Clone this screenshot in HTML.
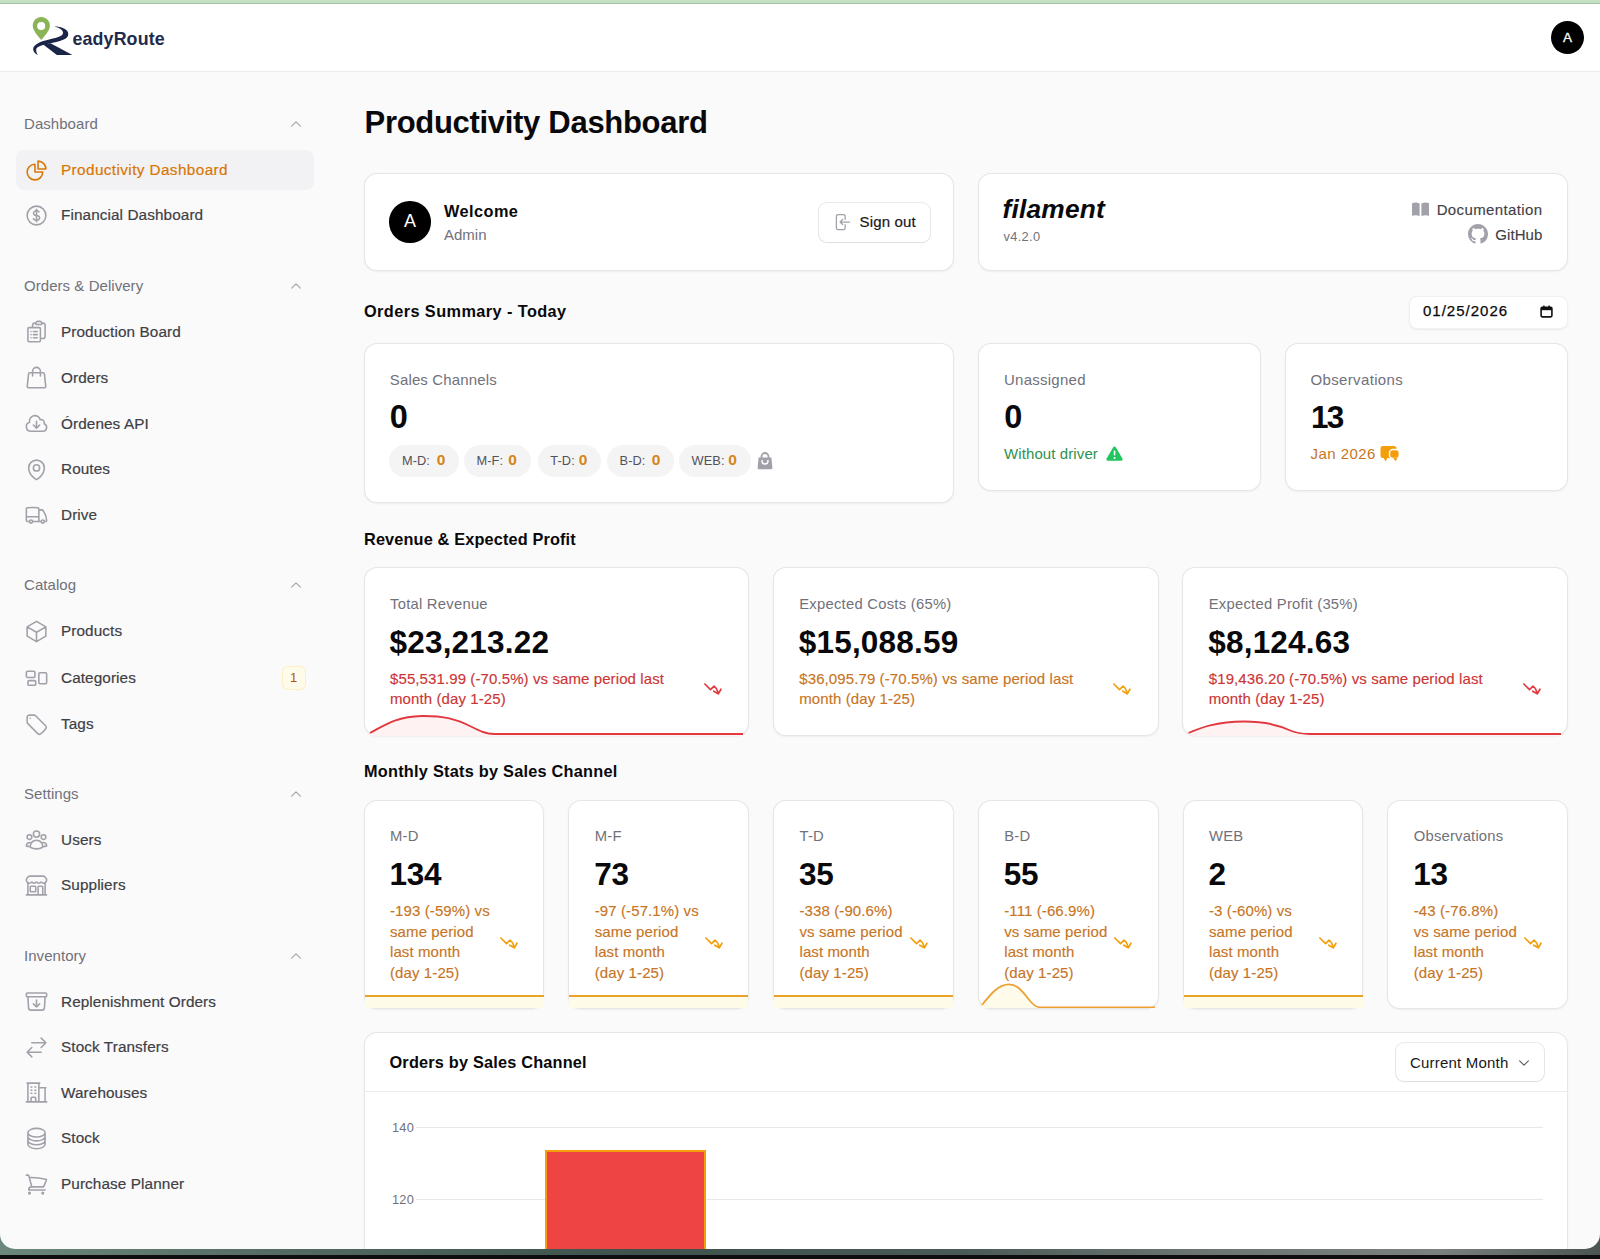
<!DOCTYPE html><html><head><meta charset="utf-8"><style>
*{box-sizing:border-box;margin:0;padding:0}
html,body{width:1600px;height:1259px;overflow:hidden;background:#0d0f10}
body{font-family:"Liberation Sans",sans-serif;position:relative;color:#09090b}
.abs{position:absolute}
.t{position:absolute;white-space:nowrap}
.card{position:absolute;background:#fff;border-radius:13px;box-shadow:inset 0 0 0 1px rgba(9,9,11,.1),0 1px 2px rgba(0,0,0,.05)}
</style></head><body>
<div class="abs" style="left:0;top:1230px;width:1600px;height:25px;background:linear-gradient(90deg,#6c887c 0%,#51675f 20%,#3f524d 40%,#4a5a56 60%,#6c7572 75%,#7b817e 90%,#4a5450 100%)"></div>
<div class="abs" style="left:0;top:0;width:1600px;height:1249px;background:#fafafa;border-radius:0 0 15px 15px;overflow:hidden">
<div class="abs" style="left:0px;top:0px;width:1600px;height:3px;background:#c3e1c3"></div>
<div class="abs" style="left:0px;top:3px;width:1600px;height:1px;background:#aabfaa"></div>
<div class="abs" style="left:0px;top:4px;width:1600px;height:67px;background:#fff"></div>
<div class="abs" style="left:0px;top:71px;width:1600px;height:1px;background:#ebebeb"></div>
<svg class="abs" style="left:0;top:0" width="80" height="60" viewBox="0 0 80 60">
<path d="M41.3,40.1 C38,36 32.75,30.5 32.75,25.7 C32.75,20.9 36.6,17.1 41.3,17.1 C46,17.1 49.9,20.9 49.9,25.7 C49.9,30.5 44.6,36 41.3,40.1 Z" fill="#8ab457"/>
<circle cx="41.2" cy="26.1" r="4" fill="#fff"/>
<path d="M54.3,26.6 C60.5,26.5 68.5,29 68.3,34.3 C68.1,39.2 61,41.3 50,43.4 C42,45 36.5,46.5 36.2,49.5 C36,51.5 36.8,53.5 37.8,54.9 C34.5,53.5 32.8,51 33.2,48.5 C33.8,44.5 40,41.6 50,39.3 C58,37.4 63,35.8 63,33 C63.1,30 59,27.5 54.3,26.6 Z" fill="#1b2547"/>
<path d="M43.2,44.6 L50.5,43.2 L72.4,55.1 L56.9,55.1 Z" fill="#1b2547"/>
</svg>
<div class="t" style="left:72.5px;top:28.60px;font-size:17.8px;line-height:20px;font-weight:bold;color:#1f2a4d;letter-spacing:0.15px;">eadyRoute</div>
<div class="abs" style="left:1551px;top:20.5px;width:33px;height:33px;border-radius:50%;background:#000;color:#fff;font-size:13.5px;line-height:33px;text-align:center;-webkit-text-stroke:0.3px #fff">A</div>
<div class="t" style="left:24px;top:114.37px;font-size:15px;line-height:20px;font-weight:normal;color:#71717a;letter-spacing:0.05px;">Dashboard</div>
<div class="abs" style="left:289.00px;top:117.20px;width:14px;height:14px;line-height:0"><svg viewBox="0 0 24 24" width="14" height="14" fill="none" stroke="#a1a1aa" stroke-width="1.8" stroke-linecap="round" stroke-linejoin="round" style=""><path d="m4.5 15.75 7.5-7.5 7.5 7.5"/></svg></div>
<div class="t" style="left:24px;top:276.17px;font-size:15px;line-height:20px;font-weight:normal;color:#71717a;letter-spacing:0.05px;">Orders &amp; Delivery</div>
<div class="abs" style="left:289.00px;top:279.00px;width:14px;height:14px;line-height:0"><svg viewBox="0 0 24 24" width="14" height="14" fill="none" stroke="#a1a1aa" stroke-width="1.8" stroke-linecap="round" stroke-linejoin="round" style=""><path d="m4.5 15.75 7.5-7.5 7.5 7.5"/></svg></div>
<div class="t" style="left:24px;top:575.47px;font-size:15px;line-height:20px;font-weight:normal;color:#71717a;letter-spacing:0.05px;">Catalog</div>
<div class="abs" style="left:289.00px;top:578.30px;width:14px;height:14px;line-height:0"><svg viewBox="0 0 24 24" width="14" height="14" fill="none" stroke="#a1a1aa" stroke-width="1.8" stroke-linecap="round" stroke-linejoin="round" style=""><path d="m4.5 15.75 7.5-7.5 7.5 7.5"/></svg></div>
<div class="t" style="left:24px;top:784.17px;font-size:15px;line-height:20px;font-weight:normal;color:#71717a;letter-spacing:0.05px;">Settings</div>
<div class="abs" style="left:289.00px;top:787.00px;width:14px;height:14px;line-height:0"><svg viewBox="0 0 24 24" width="14" height="14" fill="none" stroke="#a1a1aa" stroke-width="1.8" stroke-linecap="round" stroke-linejoin="round" style=""><path d="m4.5 15.75 7.5-7.5 7.5 7.5"/></svg></div>
<div class="t" style="left:24px;top:946.17px;font-size:15px;line-height:20px;font-weight:normal;color:#71717a;letter-spacing:0.05px;">Inventory</div>
<div class="abs" style="left:289.00px;top:949.00px;width:14px;height:14px;line-height:0"><svg viewBox="0 0 24 24" width="14" height="14" fill="none" stroke="#a1a1aa" stroke-width="1.8" stroke-linecap="round" stroke-linejoin="round" style=""><path d="m4.5 15.75 7.5-7.5 7.5 7.5"/></svg></div>
<div class="abs" style="left:16px;top:150.2px;width:298px;height:40.0px;background:#f2f2f4;border-radius:8px"></div>
<div class="abs" style="left:23.50px;top:157.70px;width:25px;height:25px;line-height:0"><svg viewBox="0 0 24 24" width="25" height="25" fill="none" stroke="#d97706" stroke-width="1.5" stroke-linecap="round" stroke-linejoin="round" style=""><path d="M10.5 6a7.5 7.5 0 1 0 7.5 7.5h-7.5V6Z"/><path d="M13.5 10.5H21A7.5 7.5 0 0 0 13.5 3v7.5Z"/></svg></div>
<div class="t" style="left:61px;top:160.38px;font-size:15.3px;line-height:20px;font-weight:normal;color:#d97706;letter-spacing:0.4px;-webkit-text-stroke:0.2px #d97706">Productivity Dashboard</div>
<div class="abs" style="left:23.50px;top:202.80px;width:25px;height:25px;line-height:0"><svg viewBox="0 0 24 24" width="25" height="25" fill="none" stroke="#a1a1aa" stroke-width="1.5" stroke-linecap="round" stroke-linejoin="round" style=""><path d="M12 6v12m-3-2.818.879.659c1.171.879 3.07.879 4.242 0 1.172-.879 1.172-2.303 0-3.182C13.536 12.219 12.768 12 12 12c-.725 0-1.45-.22-2.003-.659-1.106-.879-1.106-2.303 0-3.182s2.9-.879 4.006 0l.415.33M21 12a9 9 0 1 1-18 0 9 9 0 0 1 18 0Z"/></svg></div>
<div class="t" style="left:61px;top:205.48px;font-size:15.3px;line-height:20px;font-weight:normal;color:#3f3f46;letter-spacing:0.1px;-webkit-text-stroke:0.2px #3f3f46">Financial Dashboard</div>
<div class="abs" style="left:23.50px;top:319.30px;width:25px;height:25px;line-height:0"><svg viewBox="0 0 24 24" width="25" height="25" fill="none" stroke="#a1a1aa" stroke-width="1.5" stroke-linecap="round" stroke-linejoin="round" style=""><path d="M9 12h3.75M9 15h3.75M9 18h3.75m3 .75H18a2.25 2.25 0 0 0 2.25-2.25V6.108c0-1.135-.845-2.098-1.976-2.192a48.424 48.424 0 0 0-1.123-.08m-5.801 0c-.065.21-.1.433-.1.664 0 .414.336.75.75.75h4.5a.75.75 0 0 0 .75-.75 2.25 2.25 0 0 0-.1-.664m-5.8 0A2.251 2.251 0 0 1 13.5 2.25H15c1.012 0 1.867.668 2.15 1.586m-5.8 0c-.376.023-.75.05-1.124.08C9.095 4.01 8.25 4.973 8.25 6.108V8.25m0 0H4.875c-.621 0-1.125.504-1.125 1.125v11.25c0 .621.504 1.125 1.125 1.125h9.75c.621 0 1.125-.504 1.125-1.125V9.375c0-.621-.504-1.125-1.125-1.125H8.25ZM6.75 12h.008v.008H6.75V12Zm0 3h.008v.008H6.75V15Zm0 3h.008v.008H6.75V18Z"/></svg></div>
<div class="t" style="left:61px;top:321.98px;font-size:15.3px;line-height:20px;font-weight:normal;color:#3f3f46;letter-spacing:0.1px;-webkit-text-stroke:0.2px #3f3f46">Production Board</div>
<div class="abs" style="left:23.50px;top:365.20px;width:25px;height:25px;line-height:0"><svg viewBox="0 0 24 24" width="25" height="25" fill="none" stroke="#a1a1aa" stroke-width="1.5" stroke-linecap="round" stroke-linejoin="round" style=""><path d="M15.75 10.5V6a3.75 3.75 0 1 0-7.5 0v4.5m11.356-1.993 1.263 12c.07.665-.45 1.243-1.119 1.243H4.25a1.125 1.125 0 0 1-1.12-1.243l1.264-12A1.125 1.125 0 0 1 5.513 7.5h12.974c.576 0 1.059.435 1.119 1.007Z"/></svg></div>
<div class="t" style="left:61px;top:367.88px;font-size:15.3px;line-height:20px;font-weight:normal;color:#3f3f46;letter-spacing:0.1px;-webkit-text-stroke:0.2px #3f3f46">Orders</div>
<div class="abs" style="left:23.50px;top:411.00px;width:25px;height:25px;line-height:0"><svg viewBox="0 0 24 24" width="25" height="25" fill="none" stroke="#a1a1aa" stroke-width="1.5" stroke-linecap="round" stroke-linejoin="round" style=""><path d="M12 9.75v6.75m0 0-3-3m3 3 3-3m-8.25 6a4.5 4.5 0 0 1-1.41-8.775 5.25 5.25 0 0 1 10.233-2.33 3 3 0 0 1 3.758 3.848A3.752 3.752 0 0 1 18 19.5H6.75Z"/></svg></div>
<div class="t" style="left:61px;top:413.68px;font-size:15.3px;line-height:20px;font-weight:normal;color:#3f3f46;letter-spacing:0.1px;-webkit-text-stroke:0.2px #3f3f46">Órdenes API</div>
<div class="abs" style="left:23.50px;top:456.50px;width:25px;height:25px;line-height:0"><svg viewBox="0 0 24 24" width="25" height="25" fill="none" stroke="#a1a1aa" stroke-width="1.5" stroke-linecap="round" stroke-linejoin="round" style=""><path d="M15 10.5a3 3 0 1 1-6 0 3 3 0 0 1 6 0Z"/><path d="M19.5 10.5c0 7.142-7.5 11.25-7.5 11.25S4.5 17.642 4.5 10.5a7.5 7.5 0 1 1 15 0Z"/></svg></div>
<div class="t" style="left:61px;top:459.18px;font-size:15.3px;line-height:20px;font-weight:normal;color:#3f3f46;letter-spacing:0.1px;-webkit-text-stroke:0.2px #3f3f46">Routes</div>
<div class="abs" style="left:23.50px;top:502.00px;width:25px;height:25px;line-height:0"><svg viewBox="0 0 24 24" width="25" height="25" fill="none" stroke="#a1a1aa" stroke-width="1.5" stroke-linecap="round" stroke-linejoin="round" style=""><path d="M8.25 18.75a1.5 1.5 0 0 1-3 0m3 0a1.5 1.5 0 0 0-3 0m3 0h6m-9 0H3.375a1.125 1.125 0 0 1-1.125-1.125V14.25m17.25 4.5a1.5 1.5 0 0 1-3 0m3 0a1.5 1.5 0 0 0-3 0m3 0h1.125c.621 0 1.129-.504 1.09-1.124a17.902 17.902 0 0 0-3.213-9.193 2.056 2.056 0 0 0-1.58-.86H14.25M16.5 18.75h-2.25m0-11.177v-.958c0-.568-.422-1.048-.987-1.106a48.554 48.554 0 0 0-10.026 0 1.106 1.106 0 0 0-.987 1.106v7.635m12-6.677v6.677m0 4.5v-4.5m0 0h-12"/></svg></div>
<div class="t" style="left:61px;top:504.68px;font-size:15.3px;line-height:20px;font-weight:normal;color:#3f3f46;letter-spacing:0.1px;-webkit-text-stroke:0.2px #3f3f46">Drive</div>
<div class="abs" style="left:23.50px;top:618.50px;width:25px;height:25px;line-height:0"><svg viewBox="0 0 24 24" width="25" height="25" fill="none" stroke="#a1a1aa" stroke-width="1.5" stroke-linecap="round" stroke-linejoin="round" style=""><path d="m21 7.5-9-5.25L3 7.5m18 0-9 5.25m9-5.25v9l-9 5.25M3 7.5l9 5.25M3 7.5v9l9 5.25m0-9v9"/></svg></div>
<div class="t" style="left:61px;top:621.18px;font-size:15.3px;line-height:20px;font-weight:normal;color:#3f3f46;letter-spacing:0.1px;-webkit-text-stroke:0.2px #3f3f46">Products</div>
<div class="abs" style="left:23.50px;top:664.90px;width:25px;height:25px;line-height:0"><svg viewBox="0 0 24 24" width="25" height="25" fill="none" stroke="#a1a1aa" stroke-width="1.5" stroke-linecap="round" stroke-linejoin="round" style=""><path d="M2.25 7.125C2.25 6.504 2.754 6 3.375 6h6c.621 0 1.125.504 1.125 1.125v3.75c0 .621-.504 1.125-1.125 1.125h-6a1.125 1.125 0 0 1-1.125-1.125v-3.75ZM14.25 8.625c0-.621.504-1.125 1.125-1.125h5.25c.621 0 1.125.504 1.125 1.125v8.25c0 .621-.504 1.125-1.125 1.125h-5.25a1.125 1.125 0 0 1-1.125-1.125v-8.25ZM3.75 16.125c0-.621.504-1.125 1.125-1.125h5.25c.621 0 1.125.504 1.125 1.125v2.25c0 .621-.504 1.125-1.125 1.125h-5.25a1.125 1.125 0 0 1-1.125-1.125v-2.25Z"/></svg></div>
<div class="t" style="left:61px;top:667.58px;font-size:15.3px;line-height:20px;font-weight:normal;color:#3f3f46;letter-spacing:0.1px;-webkit-text-stroke:0.2px #3f3f46">Categories</div>
<div class="abs" style="left:23.50px;top:711.50px;width:25px;height:25px;line-height:0"><svg viewBox="0 0 24 24" width="25" height="25" fill="none" stroke="#a1a1aa" stroke-width="1.5" stroke-linecap="round" stroke-linejoin="round" style=""><path d="M9.568 3H5.25A2.25 2.25 0 0 0 3 5.25v4.318c0 .597.237 1.17.659 1.591l9.581 9.581c.699.699 1.78.872 2.607.33a18.095 18.095 0 0 0 5.223-5.223c.542-.827.369-1.908-.33-2.607L11.16 3.66A2.25 2.25 0 0 0 9.568 3Z"/><path d="M6 6h.008v.008H6V6Z"/></svg></div>
<div class="t" style="left:61px;top:714.18px;font-size:15.3px;line-height:20px;font-weight:normal;color:#3f3f46;letter-spacing:0.1px;-webkit-text-stroke:0.2px #3f3f46">Tags</div>
<div class="abs" style="left:23.50px;top:827.00px;width:25px;height:25px;line-height:0"><svg viewBox="0 0 24 24" width="25" height="25" fill="none" stroke="#a1a1aa" stroke-width="1.5" stroke-linecap="round" stroke-linejoin="round" style=""><path d="M18 18.72a9.094 9.094 0 0 0 3.741-.479 3 3 0 0 0-4.682-2.72m.94 3.198.001.031c0 .225-.012.447-.037.666A11.944 11.944 0 0 1 12 21c-2.17 0-4.207-.576-5.963-1.584A6.062 6.062 0 0 1 6 18.719m12 0a5.971 5.971 0 0 0-.941-3.197m0 0A5.995 5.995 0 0 0 12 12.75a5.995 5.995 0 0 0-5.058 2.772m0 0a3 3 0 0 0-4.681 2.72 8.986 8.986 0 0 0 3.74.477m.94-3.197a5.971 5.971 0 0 0-.94 3.197M15 6.75a3 3 0 1 1-6 0 3 3 0 0 1 6 0Zm6 3a2.25 2.25 0 1 1-4.5 0 2.25 2.25 0 0 1 4.5 0Zm-13.5 0a2.25 2.25 0 1 1-4.5 0 2.25 2.25 0 0 1 4.5 0Z"/></svg></div>
<div class="t" style="left:61px;top:829.68px;font-size:15.3px;line-height:20px;font-weight:normal;color:#3f3f46;letter-spacing:0.1px;-webkit-text-stroke:0.2px #3f3f46">Users</div>
<div class="abs" style="left:23.50px;top:872.50px;width:25px;height:25px;line-height:0"><svg viewBox="0 0 24 24" width="25" height="25" fill="none" stroke="#a1a1aa" stroke-width="1.5" stroke-linecap="round" stroke-linejoin="round" style=""><path d="M13.5 21v-7.5a.75.75 0 0 1 .75-.75h3a.75.75 0 0 1 .75.75V21m-4.5 0H2.36m11.14 0H18m0 0h3.64m-1.39 0V9.349M3.75 21V9.349m0 0a3.001 3.001 0 0 0 3.75-.615A2.993 2.993 0 0 0 9.75 9.75c.896 0 1.7-.393 2.25-1.016a2.993 2.993 0 0 0 2.25 1.016c.896 0 1.7-.393 2.25-1.015a3.001 3.001 0 0 0 3.75.614m-16.5 0a3.004 3.004 0 0 1-.621-4.72l1.189-1.19A1.5 1.5 0 0 1 5.378 3h13.243a1.5 1.5 0 0 1 1.06.44l1.19 1.189a3 3 0 0 1-.621 4.72M6.75 18h3.75a.75.75 0 0 0 .75-.75V13.5a.75.75 0 0 0-.75-.75H6.75a.75.75 0 0 0-.75.75v3.75c0 .414.336.75.75.75Z"/></svg></div>
<div class="t" style="left:61px;top:875.18px;font-size:15.3px;line-height:20px;font-weight:normal;color:#3f3f46;letter-spacing:0.1px;-webkit-text-stroke:0.2px #3f3f46">Suppliers</div>
<div class="abs" style="left:23.50px;top:989.00px;width:25px;height:25px;line-height:0"><svg viewBox="0 0 24 24" width="25" height="25" fill="none" stroke="#a1a1aa" stroke-width="1.5" stroke-linecap="round" stroke-linejoin="round" style=""><path d="m20.25 7.5-.625 10.632a2.25 2.25 0 0 1-2.247 2.118H6.622a2.25 2.25 0 0 1-2.247-2.118L3.75 7.5m8.25 3v6.75m0 0-3-3m3 3 3-3M3.375 7.5h17.25c.621 0 1.125-.504 1.125-1.125v-1.5c0-.621-.504-1.125-1.125-1.125H3.375c-.621 0-1.125.504-1.125 1.125v1.5c0 .621.504 1.125 1.125 1.125Z"/></svg></div>
<div class="t" style="left:61px;top:991.68px;font-size:15.3px;line-height:20px;font-weight:normal;color:#3f3f46;letter-spacing:0.1px;-webkit-text-stroke:0.2px #3f3f46">Replenishment Orders</div>
<div class="abs" style="left:23.50px;top:1034.50px;width:25px;height:25px;line-height:0"><svg viewBox="0 0 24 24" width="25" height="25" fill="none" stroke="#a1a1aa" stroke-width="1.5" stroke-linecap="round" stroke-linejoin="round" style=""><path d="M7.5 21 3 16.5m0 0L7.5 12M3 16.5h13.5m0-13.5L21 7.5m0 0L16.5 12M21 7.5H7.5"/></svg></div>
<div class="t" style="left:61px;top:1037.18px;font-size:15.3px;line-height:20px;font-weight:normal;color:#3f3f46;letter-spacing:0.1px;-webkit-text-stroke:0.2px #3f3f46">Stock Transfers</div>
<div class="abs" style="left:23.50px;top:1080.00px;width:25px;height:25px;line-height:0"><svg viewBox="0 0 24 24" width="25" height="25" fill="none" stroke="#a1a1aa" stroke-width="1.5" stroke-linecap="round" stroke-linejoin="round" style=""><path d="M2.25 21h19.5m-18-18v18m10.5-18v18m6-13.5V21M6.75 6.75h.75m-.75 3h.75m-.75 3h.75m3-6h.75m-.75 3h.75m-.75 3h.75M6.75 21v-3.375c0-.621.504-1.125 1.125-1.125h2.25c.621 0 1.125.504 1.125 1.125V21M3 3h12m-.75 4.5H21"/></svg></div>
<div class="t" style="left:61px;top:1082.68px;font-size:15.3px;line-height:20px;font-weight:normal;color:#3f3f46;letter-spacing:0.1px;-webkit-text-stroke:0.2px #3f3f46">Warehouses</div>
<div class="abs" style="left:23.50px;top:1125.50px;width:25px;height:25px;line-height:0"><svg viewBox="0 0 24 24" width="25" height="25" fill="none" stroke="#a1a1aa" stroke-width="1.5" stroke-linecap="round" stroke-linejoin="round" style=""><path d="M20.25 6.375c0 2.278-3.694 4.125-8.25 4.125S3.75 8.653 3.75 6.375m16.5 0c0-2.278-3.694-4.125-8.25-4.125S3.75 4.097 3.75 6.375m16.5 0v11.25c0 2.278-3.694 4.125-8.25 4.125s-8.25-1.847-8.25-4.125V6.375m16.5 0v3.75m-16.5-3.75v3.75m16.5 0v3.75C20.25 16.153 16.556 18 12 18s-8.25-1.847-8.25-4.125v-3.75m16.5 0c0 2.278-3.694 4.125-8.25 4.125s-8.25-1.847-8.25-4.125"/></svg></div>
<div class="t" style="left:61px;top:1128.18px;font-size:15.3px;line-height:20px;font-weight:normal;color:#3f3f46;letter-spacing:0.1px;-webkit-text-stroke:0.2px #3f3f46">Stock</div>
<div class="abs" style="left:23.50px;top:1171.50px;width:25px;height:25px;line-height:0"><svg viewBox="0 0 24 24" width="25" height="25" fill="none" stroke="#a1a1aa" stroke-width="1.5" stroke-linecap="round" stroke-linejoin="round" style=""><path d="M2.25 3h1.386c.51 0 .955.343 1.087.835l.383 1.437M7.5 14.25a3 3 0 0 0-3 3h15.75m-12.75-3h11.218c1.121-2.3 2.1-4.684 2.924-7.138a60.114 60.114 0 0 0-16.536-1.84M7.5 14.25 5.106 5.272M6 20.25a.75.75 0 1 1-1.5 0 .75.75 0 0 1 1.5 0Zm12.75 0a.75.75 0 1 1-1.5 0 .75.75 0 0 1 1.5 0Z"/></svg></div>
<div class="t" style="left:61px;top:1174.18px;font-size:15.3px;line-height:20px;font-weight:normal;color:#3f3f46;letter-spacing:0.1px;-webkit-text-stroke:0.2px #3f3f46">Purchase Planner</div>
<div class="abs" style="left:281.5px;top:665.5px;width:24px;height:24px;border-radius:6px;background:#fffbeb;box-shadow:inset 0 0 0 1px #fdefc4;color:#b45309;font-size:13px;line-height:24px;text-align:center">1</div>
<div class="t" style="left:364.5px;top:105.16px;font-size:31px;line-height:36px;font-weight:bold;color:#09090b;letter-spacing:-0.3px;">Productivity Dashboard</div>
<div class="card" style="left:363.5px;top:173px;width:590.25px;height:98px;"></div>
<div class="abs" style="left:389.25px;top:201.25px;width:41.5px;height:41.5px;border-radius:50%;background:#000;color:#fff;font-size:18px;line-height:41.5px;text-align:center">A</div>
<div class="t" style="left:444px;top:201.49px;font-size:16.3px;line-height:20px;font-weight:bold;color:#09090b;letter-spacing:0.45px;">Welcome</div>
<div class="t" style="left:444px;top:224.57px;font-size:15px;line-height:20px;font-weight:normal;color:#71717a;letter-spacing:0px;">Admin</div>
<div class="abs" style="left:818.75px;top:202.5px;width:110.75px;height:39px;border-radius:8px;background:#fff;box-shadow:0 0 0 1px rgba(9,9,11,.09),0 1px 2px rgba(0,0,0,.05)"></div>
<div class="abs" style="left:831.80px;top:211.80px;width:20px;height:20px;line-height:0"><svg viewBox="0 0 24 24" width="20" height="20" fill="none" stroke="#a1a1aa" stroke-width="1.5" stroke-linecap="round" stroke-linejoin="round" style=""><path d="M15.75 9V5.25A2.25 2.25 0 0 0 13.5 3h-6a2.25 2.25 0 0 0-2.25 2.25v13.5A2.25 2.25 0 0 0 7.5 21h6a2.25 2.25 0 0 0 2.25-2.25V15m-3 0-3-3m0 0 3-3m-3 3H21"/></svg></div>
<div class="t" style="left:859.5px;top:212.07px;font-size:15px;line-height:20px;font-weight:normal;color:#18181b;letter-spacing:0.15px;-webkit-text-stroke:0.2px #18181b">Sign out</div>
<div class="card" style="left:977.75px;top:173px;width:590.25px;height:98px;"></div>
<div class="t" style="left:1002.5px;top:194.40px;font-size:26.3px;line-height:30px;font-weight:bold;color:#09090b;letter-spacing:0.2px;font-style:italic">filament</div>
<div class="t" style="left:1003.5px;top:226.85px;font-size:12.8px;line-height:20px;font-weight:normal;color:#71717a;letter-spacing:0.35px;">v4.2.0</div>
<svg class="abs" style="left:1411px;top:201px" width="19" height="16" viewBox="0 0 19 16"><path d="M1 2.2 C3.5 1.2 6 1.3 8.6 2.4 V15 C6 14 3.5 13.9 1 14.8 Z" fill="#a1a1aa"/><path d="M18 2.2 C15.5 1.2 13 1.3 10.4 2.4 V15 C13 14 15.5 13.9 18 14.8 Z" fill="#a1a1aa"/></svg>
<div class="t" style="right:57.5px;top:200.07px;font-size:15px;line-height:20px;font-weight:normal;color:#3f3f46;letter-spacing:0.38px;-webkit-text-stroke:0.15px #3f3f46">Documentation</div>
<svg class="abs" style="left:1468px;top:224px" width="20" height="20" viewBox="0 0 16 16"><path fill="#a1a1aa" d="M8 0C3.58 0 0 3.58 0 8c0 3.54 2.29 6.53 5.47 7.59.4.07.55-.17.55-.38 0-.19-.01-.82-.01-1.49-2.01.37-2.53-.49-2.69-.94-.09-.23-.48-.94-.82-1.13-.28-.15-.68-.52-.01-.53.63-.01 1.08.58 1.23.82.72 1.21 1.87.87 2.33.66.07-.52.28-.87.51-1.07-1.78-.2-3.64-.89-3.64-3.95 0-.87.31-1.59.82-2.15-.08-.2-.36-1.02.08-2.12 0 0 .67-.21 2.2.82.64-.18 1.32-.27 2-.27.68 0 1.36.09 2 .27 1.53-1.04 2.2-.82 2.2-.82.44 1.1.16 1.92.08 2.12.51.56.82 1.27.82 2.15 0 3.07-1.87 3.75-3.65 3.95.29.25.54.73.54 1.48 0 1.07-.01 1.93-.01 2.2 0 .21.15.46.55.38A8.013 8.013 0 0016 8c0-4.42-3.58-8-8-8z"/></svg>
<div class="t" style="right:57.5px;top:224.77px;font-size:15px;line-height:20px;font-weight:normal;color:#3f3f46;letter-spacing:0.1px;-webkit-text-stroke:0.15px #3f3f46">GitHub</div>
<div class="t" style="left:364px;top:300.99px;font-size:16.3px;line-height:20px;font-weight:bold;color:#09090b;letter-spacing:0.42px;">Orders Summary - Today</div>
<div class="abs" style="left:1409px;top:295.5px;width:159px;height:33px;border-radius:8px;background:#fff;box-shadow:inset 0 0 0 1px rgba(9,9,11,.06),0 1px 2px rgba(0,0,0,.06)"></div>
<div class="t" style="left:1423px;top:301.37px;font-size:15px;line-height:20px;font-weight:normal;color:#09090b;letter-spacing:1.0px;-webkit-text-stroke:0.25px #09090b">01/25/2026</div>
<svg class="abs" style="left:1539.5px;top:304.5px" width="13" height="13" viewBox="0 0 13 13"><rect x="1.1" y="2.2" width="10.8" height="9.7" rx="1.3" fill="none" stroke="#111" stroke-width="1.6"/><rect x="1.1" y="2.2" width="10.8" height="3" fill="#111"/><rect x="3.2" y="0.5" width="1.4" height="2.5" fill="#111"/><rect x="8.4" y="0.5" width="1.4" height="2.5" fill="#111"/></svg>
<div class="card" style="left:363.5px;top:343.1px;width:590.25px;height:160.2px;"></div>
<div class="t" style="left:389.75px;top:369.97px;font-size:15px;line-height:20px;font-weight:normal;color:#71717a;letter-spacing:0.15px;">Sales Channels</div>
<div class="t" style="left:389.7px;top:399.37px;font-size:32.5px;line-height:36px;font-weight:bold;color:#09090b;letter-spacing:0px;">0</div>
<div class="abs" style="left:389.4px;top:444.5px;width:69.60px;height:32.5px;border-radius:16px;background:#f4f4f5"></div>
<div class="t" style="left:401.9px;top:451.05px;font-size:12.8px;line-height:20px;font-weight:normal;color:#52525b;letter-spacing:0.1px;">M-D:</div>
<div class="t" style="left:436.7px;top:450.28px;font-size:15.5px;line-height:20px;font-weight:bold;color:#d68418;letter-spacing:0px;">0</div>
<div class="abs" style="left:464px;top:444.5px;width:66.60px;height:32.5px;border-radius:16px;background:#f4f4f5"></div>
<div class="t" style="left:476.5px;top:451.05px;font-size:12.8px;line-height:20px;font-weight:normal;color:#52525b;letter-spacing:0.1px;">M-F:</div>
<div class="t" style="left:508.3px;top:450.28px;font-size:15.5px;line-height:20px;font-weight:bold;color:#d68418;letter-spacing:0px;">0</div>
<div class="abs" style="left:537.75px;top:444.5px;width:63.25px;height:32.5px;border-radius:16px;background:#f4f4f5"></div>
<div class="t" style="left:550.25px;top:451.05px;font-size:12.8px;line-height:20px;font-weight:normal;color:#52525b;letter-spacing:0.1px;">T-D:</div>
<div class="t" style="left:578.7px;top:450.28px;font-size:15.5px;line-height:20px;font-weight:bold;color:#d68418;letter-spacing:0px;">0</div>
<div class="abs" style="left:607px;top:444.5px;width:67.00px;height:32.5px;border-radius:16px;background:#f4f4f5"></div>
<div class="t" style="left:619.5px;top:451.05px;font-size:12.8px;line-height:20px;font-weight:normal;color:#52525b;letter-spacing:0.1px;">B-D:</div>
<div class="t" style="left:651.7px;top:450.28px;font-size:15.5px;line-height:20px;font-weight:bold;color:#d68418;letter-spacing:0px;">0</div>
<div class="abs" style="left:679px;top:444.5px;width:71.50px;height:32.5px;border-radius:16px;background:#f4f4f5"></div>
<div class="t" style="left:691.5px;top:451.05px;font-size:12.8px;line-height:20px;font-weight:normal;color:#52525b;letter-spacing:0.1px;">WEB:</div>
<div class="t" style="left:728.2px;top:450.28px;font-size:15.5px;line-height:20px;font-weight:bold;color:#d68418;letter-spacing:0px;">0</div>
<svg class="abs" style="left:756px;top:451px" width="18" height="19" viewBox="0 0 18 19"><path d="M5.5 7 V5.5 A3.5 3.5 0 0 1 12.5 5.5 V7" fill="none" stroke="#a1a1aa" stroke-width="1.8"/><path d="M2.6 6.5 H15.4 L16.4 17 A1.2 1.2 0 0 1 15.2 18.2 H2.8 A1.2 1.2 0 0 1 1.6 17 Z" fill="#a1a1aa"/><path d="M6 9 V10 A3 3 0 0 0 12 10 V9" fill="none" stroke="#fff" stroke-width="1.4"/></svg>
<div class="card" style="left:977.75px;top:343.1px;width:283.04999999999995px;height:147.89999999999998px;"></div>
<div class="t" style="left:1004px;top:370.07px;font-size:15px;line-height:20px;font-weight:normal;color:#71717a;letter-spacing:0.25px;">Unassigned</div>
<div class="t" style="left:1004.2px;top:399.37px;font-size:32.5px;line-height:36px;font-weight:bold;color:#09090b;letter-spacing:0px;">0</div>
<div class="t" style="left:1004px;top:444.47px;font-size:15px;line-height:20px;font-weight:normal;color:#2f9150;letter-spacing:0.1px;">Without driver</div>
<svg class="abs" style="left:1106px;top:445.5px" width="17" height="15" viewBox="0 0 17 15"><path d="M7.2 1.2 C7.8 0.2 9.2 0.2 9.8 1.2 L16.4 12.6 C17 13.6 16.3 14.8 15.1 14.8 H1.9 C0.7 14.8 0 13.6 0.6 12.6 Z" fill="#22c55e"/><rect x="7.7" y="4.6" width="1.7" height="5" rx="0.8" fill="#fff"/><circle cx="8.55" cy="11.9" r="1" fill="#fff"/></svg>
<div class="card" style="left:1284.75px;top:343.1px;width:283.25px;height:147.89999999999998px;"></div>
<div class="t" style="left:1310.5px;top:370.07px;font-size:15px;line-height:20px;font-weight:normal;color:#71717a;letter-spacing:0.35px;">Observations</div>
<div class="t" style="left:1311px;top:399.36px;font-size:31.5px;line-height:36px;font-weight:bold;color:#09090b;letter-spacing:-1.8px;">13</div>
<div class="t" style="left:1310.5px;top:444.47px;font-size:15px;line-height:20px;font-weight:normal;color:#c77525;letter-spacing:0.45px;">Jan 2026</div>
<svg class="abs" style="left:1378px;top:444px" width="24" height="20" viewBox="0 0 24 20"><rect x="2.5" y="2" width="16" height="12" rx="2.5" fill="#f59e0b"/><path d="M5 13 L7.5 17.5 L10 13 Z" fill="#f59e0b"/><rect x="11.5" y="5.5" width="9.8" height="9" rx="3.5" fill="#f59e0b" stroke="#fff" stroke-width="1.4"/><path d="M15 14.2 L18 17.2 L19.3 13.5 Z" fill="#f59e0b"/></svg>
<div class="t" style="left:364px;top:529.19px;font-size:16.3px;line-height:20px;font-weight:bold;color:#09090b;letter-spacing:0.15px;">Revenue &amp; Expected Profit</div>
<div class="card" style="left:363.5px;top:567.4px;width:385.75px;height:168.60000000000002px;overflow:hidden"></div>
<div class="t" style="left:390.0px;top:593.67px;font-size:14.8px;line-height:20px;font-weight:normal;color:#71717a;letter-spacing:0.25px;">Total Revenue</div>
<div class="t" style="left:389.5px;top:623.66px;font-size:31.5px;line-height:36px;font-weight:bold;color:#09090b;letter-spacing:0.2px;">$23,213.22</div>
<div class="t" style="left:390.0px;top:668.67px;font-size:15px;line-height:20.6px;color:#cc3535;letter-spacing:0.1px;-webkit-text-stroke:0.15px #cc3535">$55,531.99 (-70.5%) vs same period last<br>month (day 1-25)</div>
<div class="abs" style="left:703.00px;top:679.00px;width:20px;height:20px;line-height:0"><svg viewBox="0 0 24 24" width="20" height="20" fill="none" stroke="#e0393f" stroke-width="2" stroke-linecap="round" stroke-linejoin="round" style=""><path d="M2.25 6 9 12.75l4.286-4.286a11.948 11.948 0 0 1 4.306 6.43l.776 2.898m0 0 3.182-5.511m-3.182 5.51-5.511-3.181"/></svg></div>
<svg class="abs" style="left:363.5px;top:700.8px" width="386" height="35" viewBox="0 0 386 35"><path d="M6 32 C18 26 30 15.5 58 15 C80 14.8 92 18 108 26 C116 30 122 33 130 33 L379 33 L379 35 L6 35 Z" fill="#fef2f2"/><path d="M6 32 C18 26 30 15.5 58 15 C80 14.8 92 18 108 26 C116 30 122 33 130 33 L379 33" fill="none" stroke="#e03a40" stroke-width="1.9"/></svg>
<div class="card" style="left:772.75px;top:567.4px;width:385.75px;height:168.60000000000002px;overflow:hidden"></div>
<div class="t" style="left:799.25px;top:593.67px;font-size:14.8px;line-height:20px;font-weight:normal;color:#71717a;letter-spacing:0.25px;">Expected Costs (65%)</div>
<div class="t" style="left:798.75px;top:623.66px;font-size:31.5px;line-height:36px;font-weight:bold;color:#09090b;letter-spacing:0.2px;">$15,088.59</div>
<div class="t" style="left:799.25px;top:668.67px;font-size:15px;line-height:20.6px;color:#c77525;letter-spacing:0.1px;-webkit-text-stroke:0.15px #c77525">$36,095.79 (-70.5%) vs same period last<br>month (day 1-25)</div>
<div class="abs" style="left:1112.25px;top:679.00px;width:20px;height:20px;line-height:0"><svg viewBox="0 0 24 24" width="20" height="20" fill="none" stroke="#f0a010" stroke-width="2" stroke-linecap="round" stroke-linejoin="round" style=""><path d="M2.25 6 9 12.75l4.286-4.286a11.948 11.948 0 0 1 4.306 6.43l.776 2.898m0 0 3.182-5.511m-3.182 5.51-5.511-3.181"/></svg></div>
<div class="card" style="left:1182.25px;top:567.4px;width:385.75px;height:168.60000000000002px;overflow:hidden"></div>
<div class="t" style="left:1208.75px;top:593.67px;font-size:14.8px;line-height:20px;font-weight:normal;color:#71717a;letter-spacing:0.25px;">Expected Profit (35%)</div>
<div class="t" style="left:1208.25px;top:623.66px;font-size:31.5px;line-height:36px;font-weight:bold;color:#09090b;letter-spacing:0.2px;">$8,124.63</div>
<div class="t" style="left:1208.75px;top:668.67px;font-size:15px;line-height:20.6px;color:#cc3535;letter-spacing:0.1px;-webkit-text-stroke:0.15px #cc3535">$19,436.20 (-70.5%) vs same period last<br>month (day 1-25)</div>
<div class="abs" style="left:1521.75px;top:679.00px;width:20px;height:20px;line-height:0"><svg viewBox="0 0 24 24" width="20" height="20" fill="none" stroke="#e0393f" stroke-width="2" stroke-linecap="round" stroke-linejoin="round" style=""><path d="M2.25 6 9 12.75l4.286-4.286a11.948 11.948 0 0 1 4.306 6.43l.776 2.898m0 0 3.182-5.511m-3.182 5.51-5.511-3.181"/></svg></div>
<svg class="abs" style="left:1182.25px;top:700.8px" width="386" height="35" viewBox="0 0 386 35"><path d="M6.5 32 C18 27 34 20.5 62 20.5 C82 20.5 94 23 107 29 C115 32.5 121 33 128 33 L379 33 L379 35 L6 35 Z" fill="#fef2f2"/><path d="M6.5 32 C18 27 34 20.5 62 20.5 C82 20.5 94 23 107 29 C115 32.5 121 33 128 33 L379 33" fill="none" stroke="#e03a40" stroke-width="1.9"/></svg>
<div class="t" style="left:364px;top:761.39px;font-size:16.3px;line-height:20px;font-weight:bold;color:#09090b;letter-spacing:0.25px;">Monthly Stats by Sales Channel</div>
<div class="card" style="left:363.5px;top:799.9px;width:180.75px;height:209.60000000000002px;overflow:hidden"></div>
<div class="t" style="left:390.0px;top:826.37px;font-size:14.8px;line-height:20px;font-weight:normal;color:#71717a;letter-spacing:0.2px;">M-D</div>
<div class="t" style="left:389.5px;top:856.16px;font-size:31.5px;line-height:36px;font-weight:bold;color:#09090b;letter-spacing:-0.3px;">134</div>
<div class="t" style="left:390.0px;top:901.15px;font-size:15px;line-height:20.65px;color:#c77525;letter-spacing:0.1px;-webkit-text-stroke:0.15px #c77525">-193 (-59%) vs<br>same period<br>last month<br>(day 1-25)</div>
<div class="abs" style="left:499.00px;top:932.50px;width:20px;height:20px;line-height:0"><svg viewBox="0 0 24 24" width="20" height="20" fill="none" stroke="#f59e0b" stroke-width="2" stroke-linecap="round" stroke-linejoin="round" style=""><path d="M2.25 6 9 12.75l4.286-4.286a11.948 11.948 0 0 1 4.306 6.43l.776 2.898m0 0 3.182-5.511m-3.182 5.51-5.511-3.181"/></svg></div>
<svg class="abs" style="left:363.5px;top:990px" width="181" height="18" viewBox="0 0 181 18"><rect x="1" y="6" width="179" height="12.3" fill="#fefbe8"/><path d="M1 6 H180" stroke="#e9a22a" stroke-width="2.2"/></svg>
<div class="card" style="left:568.25px;top:799.9px;width:180.75px;height:209.60000000000002px;overflow:hidden"></div>
<div class="t" style="left:594.75px;top:826.37px;font-size:14.8px;line-height:20px;font-weight:normal;color:#71717a;letter-spacing:0.2px;">M-F</div>
<div class="t" style="left:594.25px;top:856.16px;font-size:31.5px;line-height:36px;font-weight:bold;color:#09090b;letter-spacing:-0.3px;">73</div>
<div class="t" style="left:594.75px;top:901.15px;font-size:15px;line-height:20.65px;color:#c77525;letter-spacing:0.1px;-webkit-text-stroke:0.15px #c77525">-97 (-57.1%) vs<br>same period<br>last month<br>(day 1-25)</div>
<div class="abs" style="left:703.75px;top:932.50px;width:20px;height:20px;line-height:0"><svg viewBox="0 0 24 24" width="20" height="20" fill="none" stroke="#f59e0b" stroke-width="2" stroke-linecap="round" stroke-linejoin="round" style=""><path d="M2.25 6 9 12.75l4.286-4.286a11.948 11.948 0 0 1 4.306 6.43l.776 2.898m0 0 3.182-5.511m-3.182 5.51-5.511-3.181"/></svg></div>
<svg class="abs" style="left:568.25px;top:990px" width="181" height="18" viewBox="0 0 181 18"><rect x="1" y="6" width="179" height="12.3" fill="#fefbe8"/><path d="M1 6 H180" stroke="#e9a22a" stroke-width="2.2"/></svg>
<div class="card" style="left:773.0px;top:799.9px;width:180.75px;height:209.60000000000002px;overflow:hidden"></div>
<div class="t" style="left:799.5px;top:826.37px;font-size:14.8px;line-height:20px;font-weight:normal;color:#71717a;letter-spacing:0.2px;">T-D</div>
<div class="t" style="left:799.0px;top:856.16px;font-size:31.5px;line-height:36px;font-weight:bold;color:#09090b;letter-spacing:-0.3px;">35</div>
<div class="t" style="left:799.5px;top:901.15px;font-size:15px;line-height:20.65px;color:#c77525;letter-spacing:0.1px;-webkit-text-stroke:0.15px #c77525">-338 (-90.6%)<br>vs same period<br>last month<br>(day 1-25)</div>
<div class="abs" style="left:908.50px;top:932.50px;width:20px;height:20px;line-height:0"><svg viewBox="0 0 24 24" width="20" height="20" fill="none" stroke="#f59e0b" stroke-width="2" stroke-linecap="round" stroke-linejoin="round" style=""><path d="M2.25 6 9 12.75l4.286-4.286a11.948 11.948 0 0 1 4.306 6.43l.776 2.898m0 0 3.182-5.511m-3.182 5.51-5.511-3.181"/></svg></div>
<svg class="abs" style="left:773.0px;top:990px" width="181" height="18" viewBox="0 0 181 18"><rect x="1" y="6" width="179" height="12.3" fill="#fefbe8"/><path d="M1 6 H180" stroke="#e9a22a" stroke-width="2.2"/></svg>
<div class="card" style="left:977.75px;top:799.9px;width:180.75px;height:209.60000000000002px;overflow:hidden"></div>
<div class="t" style="left:1004.25px;top:826.37px;font-size:14.8px;line-height:20px;font-weight:normal;color:#71717a;letter-spacing:0.2px;">B-D</div>
<div class="t" style="left:1003.75px;top:856.16px;font-size:31.5px;line-height:36px;font-weight:bold;color:#09090b;letter-spacing:-0.3px;">55</div>
<div class="t" style="left:1004.25px;top:901.15px;font-size:15px;line-height:20.65px;color:#c77525;letter-spacing:0.1px;-webkit-text-stroke:0.15px #c77525">-111 (-66.9%)<br>vs same period<br>last month<br>(day 1-25)</div>
<div class="abs" style="left:1113.25px;top:932.50px;width:20px;height:20px;line-height:0"><svg viewBox="0 0 24 24" width="20" height="20" fill="none" stroke="#f59e0b" stroke-width="2" stroke-linecap="round" stroke-linejoin="round" style=""><path d="M2.25 6 9 12.75l4.286-4.286a11.948 11.948 0 0 1 4.306 6.43l.776 2.898m0 0 3.182-5.511m-3.182 5.51-5.511-3.181"/></svg></div>
<svg class="abs" style="left:977.75px;top:980px" width="181" height="28" viewBox="0 0 181 28"><path d="M4 25 C12 15 20 4.4 31 4.4 C41 4.4 46 14 53 22 C56 25.5 58 27.3 62 27.3 L177 27.3 L177 28 L4 28 Z" fill="#fffbeb"/><path d="M4 25 C12 15 20 4.4 31 4.4 C41 4.4 46 14 53 22 C56 25.5 58 27.3 62 27.3 L177 27.3" fill="none" stroke="#eea030" stroke-width="1.8"/></svg>
<div class="card" style="left:1182.5px;top:799.9px;width:180.75px;height:209.60000000000002px;overflow:hidden"></div>
<div class="t" style="left:1209.0px;top:826.37px;font-size:14.8px;line-height:20px;font-weight:normal;color:#71717a;letter-spacing:0.2px;">WEB</div>
<div class="t" style="left:1208.5px;top:856.16px;font-size:31.5px;line-height:36px;font-weight:bold;color:#09090b;letter-spacing:-0.3px;">2</div>
<div class="t" style="left:1209.0px;top:901.15px;font-size:15px;line-height:20.65px;color:#c77525;letter-spacing:0.1px;-webkit-text-stroke:0.15px #c77525">-3 (-60%) vs<br>same period<br>last month<br>(day 1-25)</div>
<div class="abs" style="left:1318.00px;top:932.50px;width:20px;height:20px;line-height:0"><svg viewBox="0 0 24 24" width="20" height="20" fill="none" stroke="#f59e0b" stroke-width="2" stroke-linecap="round" stroke-linejoin="round" style=""><path d="M2.25 6 9 12.75l4.286-4.286a11.948 11.948 0 0 1 4.306 6.43l.776 2.898m0 0 3.182-5.511m-3.182 5.51-5.511-3.181"/></svg></div>
<svg class="abs" style="left:1182.5px;top:990px" width="181" height="18" viewBox="0 0 181 18"><rect x="1" y="6" width="179" height="12.3" fill="#fefbe8"/><path d="M1 6 H180" stroke="#e9a22a" stroke-width="2.2"/></svg>
<div class="card" style="left:1387.25px;top:799.9px;width:180.75px;height:209.60000000000002px;overflow:hidden"></div>
<div class="t" style="left:1413.75px;top:826.37px;font-size:14.8px;line-height:20px;font-weight:normal;color:#71717a;letter-spacing:0.2px;">Observations</div>
<div class="t" style="left:1413.25px;top:856.16px;font-size:31.5px;line-height:36px;font-weight:bold;color:#09090b;letter-spacing:-0.3px;">13</div>
<div class="t" style="left:1413.75px;top:901.15px;font-size:15px;line-height:20.65px;color:#c77525;letter-spacing:0.1px;-webkit-text-stroke:0.15px #c77525">-43 (-76.8%)<br>vs same period<br>last month<br>(day 1-25)</div>
<div class="abs" style="left:1522.75px;top:932.50px;width:20px;height:20px;line-height:0"><svg viewBox="0 0 24 24" width="20" height="20" fill="none" stroke="#f59e0b" stroke-width="2" stroke-linecap="round" stroke-linejoin="round" style=""><path d="M2.25 6 9 12.75l4.286-4.286a11.948 11.948 0 0 1 4.306 6.43l.776 2.898m0 0 3.182-5.511m-3.182 5.51-5.511-3.181"/></svg></div>
<div class="card" style="left:363.5px;top:1032.2px;width:1204.5px;height:400px"></div>
<div class="t" style="left:389.5px;top:1052.49px;font-size:16.3px;line-height:20px;font-weight:bold;color:#09090b;letter-spacing:0.2px;">Orders by Sales Channel</div>
<div class="abs" style="left:1396.25px;top:1043.1px;width:147.25px;height:38.15px;border-radius:8px;background:#fff;box-shadow:0 0 0 1px rgba(9,9,11,.09),0 1px 2px rgba(0,0,0,.05)"></div>
<div class="t" style="left:1410px;top:1052.57px;font-size:15px;line-height:20px;font-weight:normal;color:#18181b;letter-spacing:0.2px;">Current Month</div>
<div class="abs" style="left:1516.75px;top:1055.50px;width:14px;height:14px;line-height:0"><svg viewBox="0 0 24 24" width="14" height="14" fill="none" stroke="#52525b" stroke-width="1.8" stroke-linecap="round" stroke-linejoin="round" style=""><path d="m19.5 8.25-7.5 7.5-7.5-7.5"/></svg></div>
<div class="abs" style="left:364px;top:1091px;width:1203.5px;height:1px;background:#ececec"></div>
<div class="t" style="left:392px;top:1117.75px;font-size:12.8px;line-height:20px;font-weight:normal;color:#71717a;letter-spacing:0.2px;">140</div>
<div class="t" style="left:392px;top:1189.65px;font-size:12.8px;line-height:20px;font-weight:normal;color:#71717a;letter-spacing:0.2px;">120</div>
<div class="abs" style="left:416px;top:1127px;width:1127px;height:1.2000000000000455px;background:#e8e8e8"></div>
<div class="abs" style="left:416px;top:1198.9px;width:1127px;height:1.199999999999818px;background:#e8e8e8"></div>
<div class="abs" style="left:545px;top:1149.5px;width:161px;height:120px;background:#ef4444;border:2px solid #f59e0b;border-bottom:none"></div>
</div></body></html>
